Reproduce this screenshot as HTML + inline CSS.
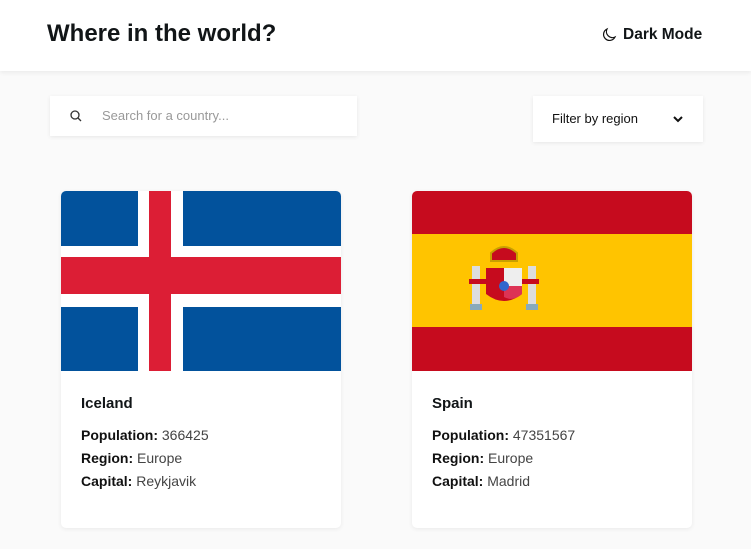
<!DOCTYPE html>
<html><head><style>
*{margin:0;padding:0;box-sizing:border-box}
body{width:751px;height:549px;overflow:hidden;background:#fafafa;font-family:"Liberation Sans",sans-serif;color:#111517;position:relative}
.hdr{position:absolute;left:0;top:0;width:751px;height:71px;background:#fff;box-shadow:0 2px 4px rgba(0,0,0,.06)}
.hdr h1{position:absolute;left:47px;top:20px;font-size:24px;font-weight:800;letter-spacing:0}
.dm{position:absolute;left:601px;top:26px;font-size:15.5px;font-weight:700;display:flex;align-items:center;gap:6px}
.search{position:absolute;left:50px;top:96px;width:307px;height:40px;background:#fff;box-shadow:0 1px 4px rgba(0,0,0,.08);font-size:13px;color:#999}
.search span{position:absolute;left:52px;top:12px}
.filter{position:absolute;left:533px;top:96px;width:170px;height:46px;background:#fff;box-shadow:0 1px 4px rgba(0,0,0,.08);font-size:13px;color:#111}
.filter span{position:absolute;left:19px;top:15px}
.card{position:absolute;top:191px;width:280px;height:337px;background:#fff;border-radius:5px;overflow:hidden;box-shadow:0 1px 5px rgba(0,0,0,.07)}
.flag{position:relative;height:180px;overflow:hidden}
.card h2{position:absolute;left:20px;top:204px;font-size:15px;font-weight:800}
.info{position:absolute;left:20px;top:233px;font-size:14px;line-height:23px;color:#444}
.info b{color:#111}
</style></head><body>
<div class="hdr"><h1>Where in the world?</h1>
<div class="dm"><svg width="16" height="16" viewBox="0 0 16 16"><path d="M6 2a6 6 0 1 0 8 8A6 6 0 0 1 6 2z" fill="none" stroke="#111" stroke-width="1.2"/></svg>Dark Mode</div></div>
<div class="search"><svg style="position:absolute;left:20px;top:14px" width="12" height="12" viewBox="0 0 12 12"><circle cx="5" cy="5" r="4" fill="none" stroke="#333" stroke-width="1.3"/><path d="M8 8l3 3" stroke="#333" stroke-width="1.3"/></svg><span>Search for a country...</span></div>
<div class="filter"><span>Filter by region</span><svg style="position:absolute;left:140px;top:19px" width="10" height="8" viewBox="0 0 10 8"><path d="M1 2l4 4 4-4" fill="none" stroke="#111" stroke-width="2"/></svg></div>

<div class="card" style="left:61px"><div class="flag" style="background:#02529c">
<div style="position:absolute;left:77px;top:0;width:45px;height:180px;background:#fff"></div>
<div style="position:absolute;left:0;top:55px;width:280px;height:61px;background:#fff"></div>
<div style="position:absolute;left:88px;top:0;width:22px;height:180px;background:#dc1e35"></div>
<div style="position:absolute;left:0;top:66px;width:280px;height:37px;background:#dc1e35"></div>
</div><h2>Iceland</h2><div class="info"><b>Population:</b> 366425<br><b>Region:</b> Europe<br><b>Capital:</b> Reykjavik</div></div>

<div class="card" style="left:412px"><div class="flag" style="background:#c60b1e">
<div style="position:absolute;left:0;top:43px;width:280px;height:93px;background:#ffc400"></div>
<svg style="position:absolute;left:55px;top:50px" width="80" height="80" viewBox="0 0 80 80">
<rect x="5" y="25" width="8" height="40" fill="#ddd"/><rect x="61" y="25" width="8" height="40" fill="#ddd"/>
<rect x="3" y="63" width="12" height="6" fill="#8ab"/><rect x="59" y="63" width="12" height="6" fill="#8ab"/>
<path d="M2 38h70v5H2z" fill="#c60b1e"/>
<path d="M24 12q13-12 26 0v8H24z" fill="#c60b1e" stroke="#c8a000" stroke-width="2"/>
<path d="M19 27h36v26q-18 14-36 0z" fill="#c60b1e"/>
<path d="M37 27h18v18H37z" fill="#eee"/>
<path d="M37 45h18v8q-9 8-18 3z" fill="#d35"/>
<circle cx="37" cy="45" r="5" fill="#36c"/>
</svg>
</div><h2>Spain</h2><div class="info"><b>Population:</b> 47351567<br><b>Region:</b> Europe<br><b>Capital:</b> Madrid</div></div>
</body></html>
